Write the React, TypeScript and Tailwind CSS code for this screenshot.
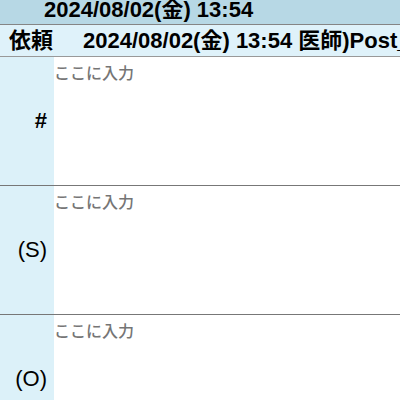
const rows = [
  { id: 'problem', label: '#', strong: true },
  { id: 'subjective', label: '(S)', strong: false },
  { id: 'objective', label: '(O)', strong: false },
];

export default function App() {
  return (
    <main className="h-screen w-full overflow-hidden bg-white font-['Liberation_Sans','Noto_Sans_CJK_JP',sans-serif] text-[22px] text-black">
      <header className="flex h-6 items-center bg-[#b7d8e5] pb-1 pl-11 leading-5 font-bold whitespace-nowrap">
        2024/08/02(金) 13:54
      </header>
      <div className="flex h-[33px] items-center gap-[30px] border-y border-[#858585] border-b-[#999] bg-[#dff2fa] pl-[9px] leading-8 font-bold whitespace-nowrap">
        <span>依頼</span>
        <span>2024/08/02(金) 13:54 医師)Post_</span>
      </div>
      {rows.map((row) => (
        <div key={row.id} className="box-content flex h-32 border-b border-[#777]">
          <label
            htmlFor={row.id}
            className={`flex w-[54px] shrink-0 items-center justify-end bg-[#dcf1f9] pr-[7px] pb-0.5 ${row.strong ? 'font-bold' : ''}`}
          >
            {row.label}
          </label>
          <textarea
            id={row.id}
            placeholder="ここに入力"
            className="min-w-0 flex-1 resize-none bg-white pt-[5px] text-base leading-6 font-medium outline-none placeholder:text-[#757575]"
          />
        </div>
      ))}
    </main>
  );
}
